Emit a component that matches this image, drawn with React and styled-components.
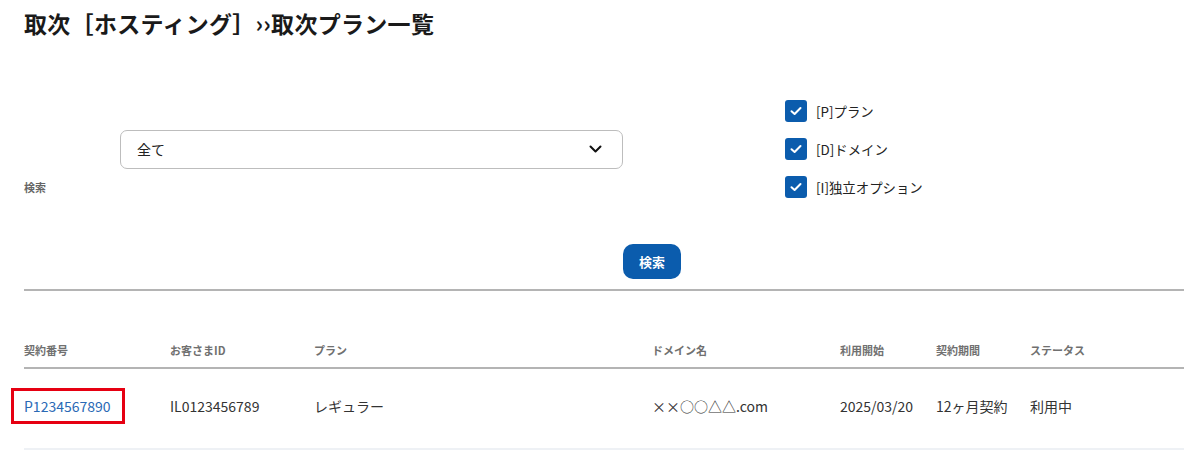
import React from 'react';
import styled, { createGlobalStyle } from 'styled-components';

const GlobalStyle = createGlobalStyle`
  body {
    margin: 0;
    background: #ffffff;
    font-family: "Noto Sans CJK JP", "Noto Sans", sans-serif;
    color: #222222;
  }
`;

const Page = styled.div`
  padding: 9px 16px 0 24px;
`;

const Title = styled.h1`
  margin: 0;
  font-size: 23px;
  line-height: 28px;
  font-weight: 700;
  color: #1a1a1a;
  letter-spacing: 0.3px;
`;

const SearchForm = styled.div`
  display: grid;
  grid-template-columns: 96px 1fr;
  align-items: center;
  margin-top: 63px;
`;

const FieldLabel = styled.div`
  font-size: 11px;
  font-weight: 700;
  color: #666666;
  margin-top: -6px;
`;

const FormBody = styled.div`
  display: flex;
  flex-direction: column;
  align-items: center;
`;

const FieldRow = styled.div`
  align-self: stretch;
  display: flex;
  align-items: center;
  gap: 162px;
`;

const SelectBox = styled.div`
  width: 503px;
  height: 39px;
  box-sizing: border-box;
  border: 1px solid #bdbdbd;
  border-radius: 7px;
  display: flex;
  align-items: center;
  justify-content: space-between;
  padding: 0 20px 0 16px;
  font-size: 14px;
  color: #222222;
`;

const CheckList = styled.div`
  display: flex;
  flex-direction: column;
  gap: 16px;
`;

const CheckItem = styled.label`
  display: flex;
  align-items: center;
  gap: 9px;
  font-size: 13.4px;
  color: #222222;
  height: 22px;
`;

const CheckBox = styled.span`
  width: 22px;
  height: 22px;
  border-radius: 3px;
  background: #0b5cad;
  display: flex;
  align-items: center;
  justify-content: center;
`;

const SearchButton = styled.button`
  margin-top: 46px;
  width: 58px;
  height: 35px;
  border: none;
  border-radius: 10px;
  background: #0b5cad;
  color: #ffffff;
  font-family: inherit;
  font-size: 13px;
  font-weight: 700;
`;

const Divider = styled.hr`
  margin: 10px 0 0;
  border: none;
  height: 2px;
  background: #b4b4b4;
`;

const Table = styled.table`
  width: 100%;
  margin-top: 42px;
  border-collapse: collapse;
  table-layout: fixed;
`;

const HeadCell = styled.th`
  width: ${p => p.$w || 'auto'};
  text-align: left;
  padding: 0;
  height: 34px;
  font-size: 11px;
  font-weight: 700;
  color: #707070;
  border-bottom: 2px solid #b4b4b4;
`;

const BodyRow = styled.tr`
  border-bottom: 2px solid #eef1f5;
`;

const Cell = styled.td`
  padding: 0 0 5px;
  height: 74px;
  font-size: 14px;
  color: #333333;
`;

const LinkWrap = styled.span`
  position: relative;
`;

const Link = styled.a`
  color: #2a69b5;
  text-decoration: none;
`;

const Highlight = styled.span`
  position: absolute;
  left: -13px;
  right: -14px;
  top: -8px;
  bottom: -8px;
  border: 3px solid #e60012;
  pointer-events: none;
`;

const Check = () => (
  <svg width="12" height="10" viewBox="0 0 12 10">
    <path d="M1.5 5.2 L4.6 8 L10.5 2" fill="none" stroke="#fff" strokeWidth="2" strokeLinecap="round" strokeLinejoin="round" />
  </svg>
);

const Chevron = () => (
  <svg width="13" height="8" viewBox="0 0 13 8">
    <path d="M1.5 1.5 L6.5 6.5 L11.5 1.5" fill="none" stroke="#111" strokeWidth="2" strokeLinecap="round" strokeLinejoin="round" />
  </svg>
);

const columns = [
  ['契約番号', '146px'],
  ['お客さまID', '144px'],
  ['プラン', '338px'],
  ['ドメイン名', '188px'],
  ['利用開始', '96px'],
  ['契約期間', '94px'],
  ['ステータス', 'auto'],
];

const options = ['[P]プラン', '[D]ドメイン', '[I]独立オプション'];

export default function App() {
  return (
    <>
      <GlobalStyle />
      <Page>
        <Title>取次［ホスティング］››取次プラン一覧</Title>

        <SearchForm>
          <FieldLabel>検索</FieldLabel>
          <FormBody>
            <FieldRow>
              <SelectBox>
                <span>全て</span>
                <Chevron />
              </SelectBox>
              <CheckList>
                {options.map(o => (
                  <CheckItem key={o}>
                    <CheckBox><Check /></CheckBox>
                    {o}
                  </CheckItem>
                ))}
              </CheckList>
            </FieldRow>
            <SearchButton>検索</SearchButton>
          </FormBody>
        </SearchForm>

        <Divider />

        <Table>
          <thead>
            <tr>
              {columns.map(([name, w]) => (
                <HeadCell key={name} $w={w}>{name}</HeadCell>
              ))}
            </tr>
          </thead>
          <tbody>
            <BodyRow>
              <Cell>
                <LinkWrap>
                  <Link href="#">P1234567890</Link>
                  <Highlight />
                </LinkWrap>
              </Cell>
              <Cell>IL0123456789</Cell>
              <Cell>レギュラー</Cell>
              <Cell>××○○△△.com</Cell>
              <Cell>2025/03/20</Cell>
              <Cell>12ヶ月契約</Cell>
              <Cell>利用中</Cell>
            </BodyRow>
          </tbody>
        </Table>
      </Page>
    </>
  );
}
